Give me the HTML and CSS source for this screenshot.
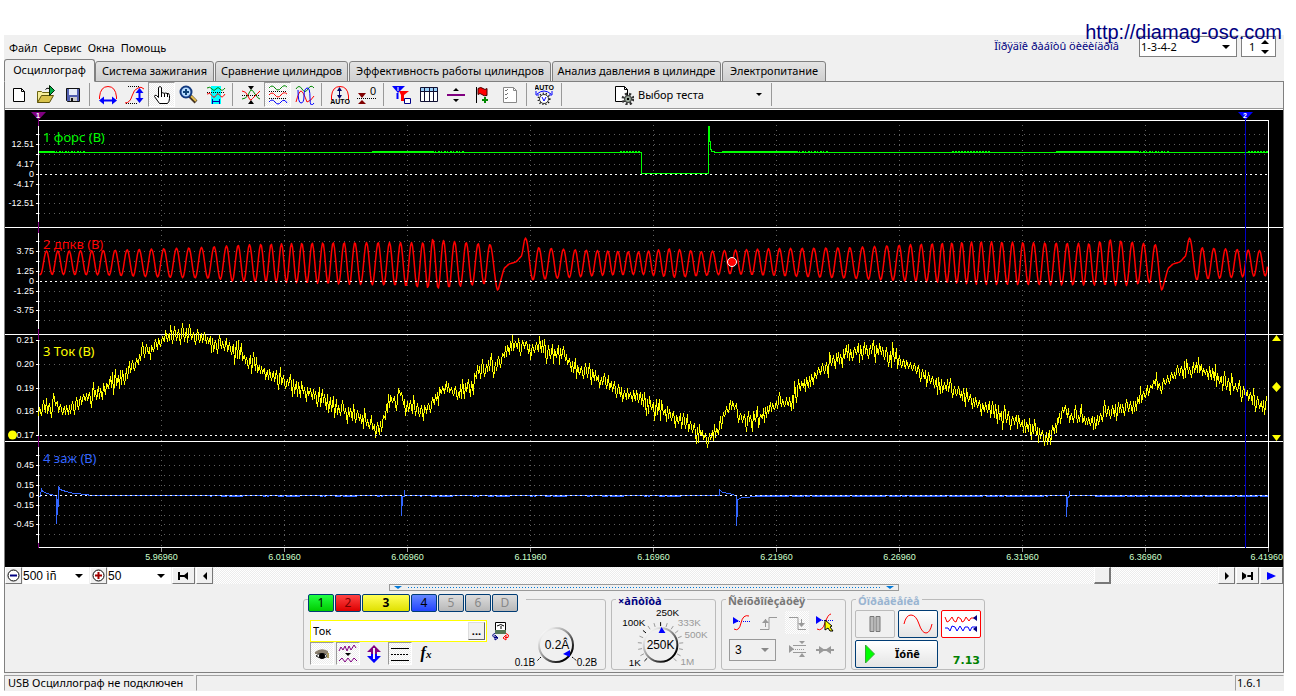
FILE: index.html
```html
<!DOCTYPE html>
<html lang="ru">
<head>
<meta charset="utf-8">
<title>Осциллограф</title>
<link rel="stylesheet" href="styles.css">
</head>
<body>
<div class="app">
  <header class="top">
    <nav class="menu">
      <button class="menu-item">Файл</button>
      <button class="menu-item">Сервис</button>
      <button class="menu-item">Окна</button>
      <button class="menu-item">Помощь</button>
    </nav>
    <div class="order">
      <label class="order-label" for="order">Ïîðÿäîê ðàáîòû öèëèíäðîâ</label>
      <span class="combo order-combo">
        <select id="order"><option>1-3-4-2</option></select>
        <svg class="combo-arrow" width="8" height="4"><path d="M0 0h8l-4 4z"/></svg>
      </span>
      <span class="combo order-count">
        <input type="number" value="1" aria-label="Цилиндр">
        <svg class="combo-arrow" width="8" height="14"><path d="M0 4h8l-4-4zM0 10h8l-4 4z"/></svg>
      </span>
    </div>
    <a class="site" href="http://diamag-osc.com">http://diamag-osc.com</a>
  </header>

  <div class="tabs" role="tablist">
    <button class="tab active" role="tab">Осциллограф</button>
    <button class="tab t2" role="tab">Система зажигания</button>
    <button class="tab t3" role="tab">Сравнение цилиндров</button>
    <button class="tab t4" role="tab">Эффективность работы цилиндров</button>
    <button class="tab t5" role="tab">Анализ давления в цилиндре</button>
    <button class="tab t6" role="tab">Электропитание</button>
  </div>

  <main class="page">
    <div class="toolbar" role="toolbar">
      <button class="tool" aria-label="Новый"><svg class="icon"><path d="M4.500 3.500h8l3 3v10h-11z" fill="#fff" stroke="#000"/><path d="M12.500 3.500v3h3" fill="none" stroke="#000"/></svg></button>
      <button class="tool" aria-label="Открыть"><svg class="icon"><path d="M1.500 17.500v-11h4l1 1h7v3" fill="#f6ee9a" stroke="#6b6410"/><path d="M1.500 17.500l4-7h12l-4 7z" fill="#d8c24a" stroke="#5c520c"/><path d="M9.500 4.500q1-2 4-1" fill="none" stroke="#000"/><path d="M13.500 0.500l5 5l-5 5z" fill="#0a4" stroke="#020"/></svg></button>
      <button class="tool" aria-label="Сохранить"><svg class="icon"><path d="M3.500 3.500h13v13h-12l-1-1z" fill="#5360b0" stroke="#111"/><path d="M6 4h8v6h-8z" fill="#e8eef8"/><path d="M7 12h7v4h-7z" fill="#ccc"/><path d="M8 13h2v3h-2z" fill="#111"/></svg></button>
      <i class="sep"></i>
      <button class="tool" aria-label="Масштаб времени"><svg class="icon"><path d="M1.500 14v-2q1-10.500 8.500-10.500t8.500 10.500v2" fill="none" stroke="#f00"/><path d="M1 15.500l5-4v3h8v-3l5 4l-5 4v-3h-8v3z" fill="#00f"/></svg></button>
      <button class="tool" aria-label="Масштаб амплитуды"><svg class="icon"><path d="M3 1.500h12M1 18.500h12" stroke="#000" stroke-dasharray="1 1"/><path d="M0 18q5 0 7-7t6-8q3-2 6 1" fill="none" stroke="#f00"/><path d="M14.500 3l4 5h-3v5h3l-4 5l-4-5h3v-5h-3z" fill="#00f"/></svg></button>
      <button class="tool pressed" aria-label="Рука"><svg class="icon"><path d="M7.500 18.500l-5-7q0-2 2-1l2 2v-10q1.500-2 3 0v6q1.500-2 2.500 0q2-1 3 0q2-1 2.500 2v3q0 3-2 5z" fill="#fff" stroke="#000"/><path d="M9.500 8v4M12.500 9v3M15.500 9v3" stroke="#000"/></svg></button>
      <button class="tool" aria-label="Лупа"><svg class="icon"><path d="M11 11l6 6" stroke="#432" stroke-width="4"/><path d="M12 11l5 5" stroke="#e5bf50" stroke-width="2"/><circle cx="7" cy="7" r="5.500" fill="#b8dcff" stroke="#123a80" stroke-width="2"/><path d="M7 4v6M4 7h6" stroke="#147" stroke-width="2"/></svg></button>
      <button class="tool" aria-label="Выделить период"><svg class="icon"><path d="M5 1h10v18h-10z" fill="#0ff"/><path d="M1 3q3-2 5 1t4 0t4 0t5-1" fill="none" stroke="#080"/><path d="M1 7.500h18" stroke="#000" stroke-dasharray="1 1"/><path d="M1 9q3-2 5 1.500t4 0t4 0t5-1.500" fill="none" stroke="#f00"/><path d="M6 16.500h8M6.500 14v5M13.500 14v5" stroke="#00a"/></svg></button>
      <i class="sep"></i>
      <button class="tool" aria-label="Наложить"><svg class="icon"><path d="M7 1h6l-3 4zM7 19h6l-3-4z"/><path d="M1 10.500h18" stroke="#000" stroke-dasharray="1 1"/><path d="M1 14q4 0 6-4t3-5t4 4t5 5" fill="none" stroke="#080"/><path d="M1 6q4 0 6 5t3 4t4-4t5-5" fill="none" stroke="#f00"/></svg></button>
      <button class="tool pressed" aria-label="Разнести"><svg class="icon"><path d="M1 3q3-4 6 0t6 0t6-1" fill="none" stroke="#080"/><path d="M1 6.500h18M1 13.500h18" stroke="#000" stroke-dasharray="1 1"/><path d="M1 10q3-4 6 0t6 0t6-1" fill="none" stroke="#f00"/><path d="M1 17q3-4 6 0t6 0t6 1" fill="none" stroke="#00f"/></svg></button>
      <button class="tool" aria-label="Совместить"><svg class="icon"><path d="M1 4q3-5 6 0t6 0t6-1" fill="none" stroke="#080"/><path d="M1 17q3-11 5-11t6 11q4-1 7-6" fill="none" stroke="#f00"/><path d="M3 5q0 13 3 13t3-7t3-8t3 10t4 5" fill="none" stroke="#00f"/></svg></button>
      <i class="sep"></i>
      <button class="tool" aria-label="Автомасштаб"><svg class="icon"><path d="M1.500 15v-4q1-9.500 8.500-9.500t8.500 9.500v4" fill="none" stroke="#f00"/><path d="M9.500 3v10" stroke="#006"/><path d="M7 6h5l-2.500-4zM7 10h5l-2.500 4z" fill="#006"/><text x="10" y="19" class="auto">AUTO</text></svg></button>
      <button class="tool" aria-label="Ноль"><svg class="icon"><path d="M1 8h8l-4 5zM1 19h8l-4-4z" fill="#800000"/><path d="M0 13.500h19" stroke="#000" stroke-dasharray="1 1"/><text x="16" y="10" class="zero">0</text></svg></button>
      <i class="sep"></i>
      <button class="tool" aria-label="Фильтр"><svg class="icon"><path d="M0 1h13l-7 7z" fill="#00f"/><path d="M7 6h10l-5 4v6h-3v-6z" fill="#f00"/><path d="M5.500 8v6" stroke="#00f" stroke-width="2"/><path d="M12.500 13.500h6v5h-6z" fill="#fff" stroke="#008"/><path d="M6 2v4" stroke="#fff"/></svg></button>
      <button class="tool" aria-label="Таблица"><svg class="icon"><path d="M1.500 2.500h17v14h-17z" fill="#fff" stroke="#113"/><path d="M2 3h16v3h-16z" fill="#9cd0f8"/><path d="M1.500 6.500h17M5.500 3v13M10.500 3v13M14.500 3v13" stroke="#113"/></svg></button>
      <button class="tool" aria-label="Разделитель"><svg class="icon"><path d="M7 6h6l-3-3zM7 14h6l-3 3z"/><path d="M1 10h18" stroke="#800080" stroke-width="2"/></svg></button>
      <button class="tool" aria-label="Добавить метку"><svg class="icon"><path d="M3.500 2v16" stroke="#000"/><path d="M5 3.500q3-2 5 0t4 0v7q-3 1-5-1t-4 0z" fill="#f00" stroke="#400"/><path d="M12 12v6M9 15h6" stroke="#080" stroke-width="2"/></svg></button>
      <button class="tool" aria-label="Отчёт"><svg class="icon"><path d="M3.500 2.500h10l3 3v12h-13z" fill="#fff" stroke="#888"/><path d="M5 5l1 1l2-2M5 9l1 1l2-2M5 13l1 1l2-2" fill="none" stroke="#777"/><path d="M13.500 2.500v3h3" fill="none" stroke="#888"/></svg></button>
      <i class="sep"></i>
      <button class="tool" aria-label="Авто"><svg class="icon"><text x="9" y="5" class="auto">AUTO</text><path d="M2 9q7-6 14 0M1 6v4h3M17 6v4h-3" fill="none" stroke="#00f"/><circle cx="9" cy="14" r="5.500" fill="none" stroke="#000" stroke-width="2" stroke-dasharray="1 2"/><circle cx="9" cy="14" r="4.500" fill="#fff" stroke="#333"/><path d="M7 12l2 4l2-4" fill="none" stroke="#00f"/></svg></button>
      <i class="sep"></i>
      <button class="test">
        <svg class="icon"><path d="M1.500 1.500h9l3 3v12h-12z" fill="#fff" stroke="#000"/><path d="M10.500 1.500v3h3" fill="none" stroke="#000"/><circle cx="14" cy="14" r="5" fill="none" stroke="#333" stroke-width="3" stroke-dasharray="2 2"/><circle cx="14" cy="14" r="3.500" fill="#9aa89a" stroke="#333"/><path d="M13 13h2v2h-2z"/></svg>
        <span class="test-name">Выбор теста</span>
        <svg width="6" height="3"><path d="M0 0h6l-3 3z"/></svg>
      </button>
      <i class="sep"></i>
    </div>

    <svg class="scope" viewBox="5 110 1278 457" role="img" aria-label="Осциллограмма">
      <g id="grid"></g>
      <g id="traces"></g>
      <g id="front"></g>
    </svg>

    <div class="timeline">
      <button class="step" aria-label="Уменьшить"><svg width="13" height="13"><circle cx="6.500" cy="6.500" r="5.500" fill="#fff" stroke="#000"/><path d="M3 6.500h7" stroke="#000080" stroke-width="2"/></svg></button>
      <span class="combo time-combo"><select aria-label="Период"><option>500 ìñ</option></select><svg class="combo-arrow" width="8" height="4"><path d="M0 0h8l-4 4z"/></svg></span>
      <button class="step" aria-label="Увеличить"><svg width="13" height="13"><circle cx="6.500" cy="6.500" r="5.500" fill="#fff" stroke="#000"/><path d="M3 6.500h7M6.500 3v7" stroke="#a00000" stroke-width="2"/></svg></button>
      <span class="combo count-combo"><select aria-label="Число точек"><option>50</option></select><svg class="combo-arrow" width="8" height="4"><path d="M0 0h8l-4 4z"/></svg></span>
      <button class="step wide" aria-label="В начало"><svg width="11" height="8"><path d="M0 0h2v8h-2zM10 0v8l-5-4zM2 3h5v2h-5z"/></svg></button>
      <button class="step" aria-label="Назад"><svg width="4" height="8"><path d="M4 0v8l-4-4z"/></svg></button>
      <input class="scroll" type="range" min="0" max="1000" value="892" aria-label="Прокрутка">
      <button class="step" aria-label="Вперёд"><svg width="4" height="8"><path d="M0 0v8l4-4z"/></svg></button>
      <button class="step wide" aria-label="В конец"><svg width="11" height="8"><path d="M9 0h2v8h-2zM0 0v8l6-4zM4 3h5v2h-5z"/></svg></button>
      <button class="step wide" aria-label="Играть"><svg width="9" height="8"><path d="M0 0v8l9-4z" fill="#00f"/></svg></button>
    </div>

    <div class="splitter">
      <svg width="8" height="3"><path d="M0 0h8l-4 3z" fill="#0078d7"/></svg>
      <i class="dots"></i>
      <svg width="8" height="3"><path d="M0 0h8l-4 3z" fill="#0078d7"/></svg>
    </div>

    <div class="controls">
      <section class="group channels">
        <div class="chan-row">
          <button class="chan green">1</button>
          <button class="chan red">2</button>
          <button class="chan yellow">3</button>
          <button class="chan blue">4</button>
          <button class="chan off" disabled>5</button>
          <button class="chan off" disabled>6</button>
          <button class="chan off" disabled>D</button>
        </div>
        <div class="chan-body">
          <div class="chan-left">
            <div class="name-row">
              <div class="name-box"><input class="name" type="text" value="Ток" aria-label="Имя канала"><button class="more">...</button></div>
              <button class="mini" aria-label="Датчик"><svg class="icon"><path d="M4.500 1.500h10v8h-10z" fill="#fff" stroke="#000"/><path d="M4 9h11v4h-11z" fill="#575"/><path d="M6 5q4-3 7 0M10 5v3" fill="none" stroke="#000"/><path d="M4 12.500q-4 1-1 4h3M4 14v5l3-2z" fill="none" stroke="#000080"/><path d="M15 12.500q4 1 2 4h-3M15 14v5l-3-2z" fill="none" stroke="#f00"/></svg></button>
            </div>
            <div class="mini-row">
              <button class="mini on" aria-label="Видимость"><svg class="icon"><path d="M3 8q6-5 13-1v3h-13z" fill="#8a8070"/><path d="M4 12q5-5 12 0q-6 4-12 0z" fill="#fff" stroke="#222"/><circle cx="10" cy="12" r="3" fill="#000"/><path d="M15 9h2v5h-2z" fill="#aa9a60"/></svg></button>
              <button class="mini on" aria-label="Сглаживание"><svg class="icon"><path d="M1 7l2-4l2 3l2-4l2 5l2-5l2 4l3-5l2 3" fill="none" stroke="#800080"/><path d="M7 9h6l-3 3z"/><path d="M1 17l3-3l3 4l3-4l3 4l3-4l3 3" fill="none" stroke="#800080"/></svg></button>
              <button class="mini" aria-label="Инвертировать"><svg class="icon"><path d="M10 1l7 7h-4v2h-6v-2h-4z" fill="#800080"/><path d="M10 19l7-7h-4v-2h-6v2h-4z" fill="#00f"/><path d="M10 4v11" stroke="#f0f0f0" stroke-width="2"/></svg></button>
              <button class="mini on" aria-label="Уровни"><svg class="icon"><path d="M1 4.500h18M1 16.500h18" stroke="#000"/><path d="M1 10.500h18" stroke="#000" stroke-dasharray="2 1"/></svg></button>
              <button class="mini fx" aria-label="Формула">f<small>x</small></button>
            </div>
          </div>
          <svg class="level" viewBox="0 0 84 60" role="slider" aria-label="Уровень" aria-valuenow="0.2">
            <defs><linearGradient id="rim" x1="0" y1="0" x2="1" y2="1"><stop offset="0.100" stop-color="#fff"/><stop offset="0.450" stop-color="#999"/><stop offset="0.850" stop-color="#000"/></linearGradient></defs>
            <circle cx="43" cy="29" r="17" fill="#f0f0f0" stroke="url(#rim)" stroke-width="2"/>
            <path d="M50 38l7-4v7z" fill="#00f"/><path d="M28 41l-4 4M59 41l5 4" stroke="#000" stroke-dasharray="2 1"/>
            <text class="val" x="44" y="33">0.2Â</text><text class="lab" x="12" y="50">0.1В</text><text class="lab" x="74" y="50">0.2В</text>
          </svg>
        </div>
      </section>

      <section class="group freq">
        <h2 class="navy">×àñòîòà</h2>
        <svg class="rate" viewBox="612 606 104 62" role="slider" aria-label="Частота" aria-valuenow="250">
          <g id="ticks"></g>
          <circle cx="661" cy="645" r="17" fill="#f0f0f0" stroke="url(#rim)" stroke-width="2"/>
          <path d="M659 633l3-6l4 6z" fill="#00f"/>
          <text class="val" x="661" y="649">250K</text>
          <text class="lab" x="668" y="616">250K</text><text class="lab" x="634" y="626">100K</text><text class="lab" x="635" y="666">1K</text>
          <text class="lab dim" x="690" y="626">333K</text><text class="lab dim" x="697" y="638">500K</text><text class="lab dim" x="688" y="665">1M</text>
        </svg>
      </section>

      <section class="group sync">
        <h2 class="gray">Ñèíõðîíèçàöèÿ</h2>
        <div class="sync-grid">
          <button class="mini" aria-label="Синхронизация"><svg class="icon"><path d="M2 4v7l6-3z" fill="#00f"/><path d="M2 8.500h17" stroke="#00f" stroke-dasharray="1 1"/><path d="M3 16q5 3 7-6t8-7" fill="none" stroke="#f00"/></svg></button>
          <button class="mini" aria-label="Фронт" disabled><svg class="icon"><path d="M1 16.500h9v-12h8" fill="none" stroke="#999"/><path d="M6.500 6v8" stroke="#999"/><path d="M3 10h7l-3.500-4z" fill="#999"/></svg></button>
          <button class="mini check" aria-label="Спад" disabled><svg class="icon"><path d="M2 4.500h9v12h8" fill="none" stroke="#999"/><path d="M14.500 6v7" stroke="#999"/><path d="M11 10h7l-3.500 4z" fill="#999"/></svg></button>
          <button class="mini" aria-label="Ручная"><svg class="icon"><path d="M1 3v8l6-4z" fill="#00f"/><path d="M1 7.500h18" stroke="#00f" stroke-dasharray="1 1"/><path d="M2 16q5 3 8-6t6-9" fill="none" stroke="#f00"/><path d="M10 7l7 6l-2 1l3 4h-3l-2-3l-3 2z" fill="#ff0" stroke="#000"/></svg></button>
          <span class="combo sync-combo"><select aria-label="Канал" disabled><option>3</option></select><svg class="combo-arrow" width="8" height="4"><path d="M0 0h8l-4 4z" fill="#888"/></svg></span>
          <button class="mini" aria-label="Уровень" disabled><svg class="icon"><path d="M2 5v8l5-4zM12 1h6l-3 3zM12 17h6l-3-4z" fill="#999"/><path d="M4 9.500h14" stroke="#999" stroke-dasharray="1 1"/><path d="M6 5.500h13M6 12.500h13" stroke="#999"/></svg></button>
          <button class="mini" aria-label="Центр" disabled><svg class="icon"><path d="M4 6l6 4l-6 4zM16 6l-6 4l6 4z" fill="#999"/><path d="M1 10h18" stroke="#999" stroke-width="2"/></svg></button>
        </div>
      </section>

      <section class="group run">
        <h2 class="pale">Óïðàâëåíèå</h2>
        <div class="run-row">
          <button class="big off" aria-label="Пауза" disabled><svg width="12" height="16"><path d="M1 .5h4v15h-4zM7 .5h4v15h-4z" fill="#bbb" stroke="#777"/></svg></button>
          <button class="big" aria-label="Синус"><svg width="30" height="20"><path d="M1 10q2-9 7-9t8 9t7 9t6-9" fill="none" stroke="#f00"/></svg></button>
          <button class="big sel" aria-label="Поток"><svg width="34" height="20"><path d="M1 3l2 5l2-1l3-4l2 4l2 1l2-5l3 2l1 3l2-1l2-4l3 4l2-3h4" fill="none" stroke="#f00"/><path d="M1 14h3l2 3l2-5l3 1l2 4l3-5l3 5l2-4l3 0l2 4l2-4h4" fill="none" stroke="#00f"/><path d="M33 1v6l-4-3zM33 12v6l-4-3z" fill="#000080"/></svg></button>
        </div>
        <div class="run-row">
          <button class="start"><svg width="10" height="20"><path d="M.5 1v18l9-9z" fill="#0f0" stroke="#3a3"/></svg><span>Ïóñê</span></button>
          <output class="volt">7.13</output>
        </div>
      </section>
    </div>
  </main>

  <footer class="status">
    <span class="pane state">USB Осциллограф не подключен</span>
    <span class="pane fill"></span>
    <span class="pane ver">1.6.1</span>
  </footer>
</div>
<script src="scope.js"></script>
</body>
</html>
```

FILE: styles.css
```css
* { box-sizing: border-box; }
body {
  margin: 0;
  padding: 35px 12px 5px 4px;
  background: #fff;
  color: #000;
  font: 11px/14px "Noto Sans", sans-serif;
}
button, input, select { font: inherit; color: inherit; margin: 0; padding: 0; border: 0; background: none; border-radius: 0; }
select { appearance: none; opacity: 1; }
input[type="number"] { appearance: textfield; }
input::-webkit-inner-spin-button { appearance: none; margin: 0; }
svg { display: block; flex: none; }
.icon { width: 20px; height: 20px; }
.auto { font: bold 7px "Liberation Sans", sans-serif; text-anchor: middle; }
.zero { font: 11px "Liberation Sans", sans-serif; text-anchor: middle; }

.app { background: #f0f0f0; }
.top { position: relative; display: flex; height: 24px; align-items: center; }
.menu { display: flex; gap: 6px; padding: 2px 0 0 5px; }
.order { display: flex; align-items: center; margin-left: auto; padding-right: 8px; gap: 4px; height: 22px; align-self: flex-start; }
.order-label { color: #000080; font-size: 11px; margin-right: 16px; }
.combo { display: grid; align-items: center; background: #fff; }
.combo > * { grid-area: 1 / 1; }
.combo > select, .combo > input { width: 100%; height: 100%; }
.combo-arrow { justify-self: end; margin-right: 6px; pointer-events: none; }
.order-combo, .order-count { height: 21px; border: 1px solid #808080; margin-top: 1px; }
.order-combo { width: 98px; }
.order-combo select { padding-left: 1px; }
.order-count { width: 35px; }
.order-count input { padding-left: 7px; }
.site { position: absolute; right: 2px; top: -15px; color: #000080; font: 20px/24px "Liberation Sans", sans-serif; text-decoration: none; }

.tabs { display: flex; align-items: flex-end; height: 23px; gap: 1px; margin-bottom: -1px; }
.tab { height: 21px; padding-bottom: 2px; border: 1px solid #808080; border-radius: 3px 3px 0 0; background: linear-gradient(#e4e4e4, #cfcfcf); white-space: nowrap; }
.tab.active { width: 91px; height: 23px; background: #f0f0f0; border-bottom-color: #f0f0f0; margin-right: -1px; }
.t2 { width: 119px; } .t3 { width: 133px; } .t4 { width: 202px; } .t5 { width: 169px; } .t6 { width: 104px; }

.page { border: 1px solid #808080; }
.toolbar { display: flex; align-items: center; height: 28px; padding-bottom: 2px; border-bottom: 1px solid #fff; box-shadow: inset 0 -1px #999; }
.tool { width: 27px; height: 25px; display: grid; place-items: center; }
.pressed, .on, .check { background: repeating-conic-gradient(#fff 0 25%, #ececec 0 50%) 0 0 / 2px 2px; border: 1px solid; border-color: #999 #fff #fff #999; }
.check { border: 0; }
.sep { width: 1px; height: 23px; margin: 0 4px 0 3px; background: #999; }
.test { display: flex; align-items: center; gap: 4px; width: 202px; padding: 0 6px 0 48px; }
.test-name { flex: 1; text-align: left; }

.scope { width: 100%; height: auto; background: #000; }
.axis { font: 9px "Liberation Sans", sans-serif; fill: #fff; text-anchor: end; }
.time { font: 9px "Liberation Sans", sans-serif; fill: #cfc; text-anchor: middle; }
.time.last { text-anchor: end; }
.title { font: 13px "Noto Sans", sans-serif; }
.mark { font: bold 7px "Liberation Sans", sans-serif; fill: #fff; text-anchor: middle; }
.px { shape-rendering: crispEdges; fill: none; stroke-width: 1; }
.wave { fill: none; stroke-width: 1.5; stroke-linejoin: round; }

.timeline { display: flex; height: 17px; gap: 1px; background: #f0f0f0; }
.step { width: 17px; display: grid; place-items: center; border: 1px solid; border-color: #fff #777 #777 #fff; background: #f0f0f0; flex: none; }
.step.wide { width: 23px; }
.time-combo { width: 66px; }
.count-combo { width: 63px; }
.timeline select { font: 12px "Liberation Sans", sans-serif; }
.scroll { appearance: none; flex: 1; min-width: 0; height: 17px; background: repeating-conic-gradient(#fff 0 25%, #ececec 0 50%) 0 0 / 2px 2px; }
.scroll::-webkit-slider-thumb { appearance: none; width: 17px; height: 17px; background: #f0f0f0; border: 1px solid; border-color: #fff #777 #777 #fff; border-width: 1px 2px 2px 1px; }

.splitter { display: flex; align-items: center; width: 510px; height: 7px; margin: 0 auto; padding: 0 4px; gap: 6px; border: 1px solid #999; }
.dots { flex: 1; height: 1px; background: repeating-linear-gradient(90deg, #0078d7 0 1px, transparent 1px 3px); }

.controls { display: flex; justify-content: center; gap: 5px; padding: 8px 0 2px; }
.group { border: 1px solid #bbb; border-radius: 3px; height: 71px; }
.group h2 { width: max-content; margin: -6px 0 0 4px; padding: 0 2px; background: #f0f0f0; font: bold 11px/14px "Noto Sans", sans-serif; }
.navy { color: #000080; } .gray { color: #777; } .pale { color: #99b4d1; }
.channels { width: 303px; padding-left: 4px; }
.chan-row { display: flex; gap: 1px; width: 218px; margin-top: -6px; background: #f0f0f0; }
.chan { width: 26px; height: 18px; border: 1px solid #003c74; border-radius: 2px; font: 12px/14px "Noto Sans", sans-serif; }
.chan.green { background: linear-gradient(#2f4, #0c0); }
.chan.red { background: linear-gradient(#f44, #d00); color: #700; }
.chan.yellow { width: 48px; background: linear-gradient(#ff5, #e0e000); font-weight: bold; }
.chan.blue { background: linear-gradient(#68f, #24f); }
.chan.off { background: linear-gradient(#ddd, #b8b8b8); color: #888; }
.chan-body { display: flex; }
.chan-left { padding: 7px 0 0 2px; width: 205px; }
.name-row { display: flex; align-items: center; gap: 2px; }
.name-box { display: flex; width: 177px; height: 22px; padding: 1px; border: 1px solid #ff0; background: #fff; }
.name { flex: 1; min-width: 0; padding-left: 1px; font: 11px "Noto Sans", sans-serif; }
.more { width: 17px; border: 1px solid; border-color: #ddd #666 #666 #ddd; background: #f0f0f0; font-weight: bold; line-height: 10px; }
.mini { width: 24px; height: 23px; display: grid; place-items: center; }
.mini-row { display: flex; gap: 2px; }
.fx { display: block; font: italic bold 16px/20px "Liberation Serif", serif; }
.fx small { font-size: 11px; }
.level { width: 84px; height: 60px; margin-top: 4px; }
.val { font: 12px "Liberation Sans", sans-serif; text-anchor: middle; }
.lab { font: 10px "Liberation Sans", sans-serif; text-anchor: middle; }
.dim { fill: #999; }
.freq { width: 105px; }
.rate { width: 103px; height: 62px; margin-top: -2px; }
.sync { width: 125px; }
.sync-grid { display: grid; grid-template-columns: 24px 24px 24px 24px; gap: 4px; padding: 3px 0 0 7px; align-items: center; }
.sync-combo { grid-column: span 2; width: 47px; height: 22px; border: 1px solid #999; background: #f0f0f0; }
.sync-combo select { padding-left: 5px; font: 12px "Liberation Sans", sans-serif; }
.run { width: 134px; }
.run-row { display: flex; gap: 3px; padding: 2px 0 0 3px; }
.big { width: 40px; height: 28px; display: grid; place-items: center; border: 1px solid #003c74; border-radius: 2px; background: linear-gradient(#fff, #e4e4e4); }
.big.off { border-color: #bbb; background: #f0f0f0; }
.big.sel { border-color: #f00; background: #fff; }
.start { width: 83px; height: 28px; display: flex; align-items: center; gap: 20px; padding-left: 9px; border: 1px solid #003c74; border-radius: 2px; background: linear-gradient(#fff, #e4e4e4); font-weight: bold; }
.volt { flex: 1; padding: 13px 4px 0 0; text-align: right; color: #008000; font: bold 11px/16px "DejaVu Sans", sans-serif; }

.status { display: flex; gap: 2px; padding-top: 2px; height: 18px; line-height: 13px; }
.pane { border: 1px solid; border-color: #a0a0a0 #f0f0f0 #f0f0f0 #a0a0a0; padding-left: 3px; white-space: nowrap; overflow: hidden; }
.state { width: 190px; }
.fill { flex: 1; }
.ver { width: 49px; padding-left: 1px; }
```

FILE: scope.js
```js
const LEFT = 38.5, RIGHT = 1268.5;
const line = (d, color, extra = '') => `<path class="px" d="${d}" stroke="${color}" ${extra}/>`;
const text = (cls, x, y, s, extra = '') => `<text class="${cls}" x="${x}" y="${y}" ${extra}>${s}</text>`;

const channels = [
  { title: '1 форс (В)', color: '#0f0', y: 142, zero: 174, rows: [134, 144, 154, 164, 174, 184, 194, 203, 213],
    labels: { 144: '12.51', 164: '4.17', 174: '0', 184: '-4.17', 203: '-12.51' } },
  { title: '2 дпкв (В)', color: '#f00', y: 249, zero: 281, rows: [241, 251, 261, 271, 281, 291, 301, 310, 320],
    labels: { 251: '3.75', 271: '1.25', 281: '0', 291: '-1.25', 310: '-3.75' } },
  { title: '3 Ток (В)', color: '#ff0', y: 356, zero: 435, rows: [340, 364, 388, 411, 435],
    labels: { 340: '0.21', 364: '0.20', 388: '0.19', 411: '0.18', 435: '0.17' } },
  { title: '4 заж (В)', color: '#36f', y: 463, zero: 495, rows: [455, 465, 475, 485, 495, 505, 515, 524, 534],
    labels: { 465: '0.45', 485: '0.15', 495: '0', 505: '-0.15', 524: '-0.45' } }
];

let seed = 7;
const rand = () => (seed = (seed * 16807) % 2147483647) / 2147483647;

function at(points, x) {
  for (let i = 1; i < points.length; i++) {
    if (x <= points[i][0]) {
      const [x0, y0] = points[i - 1], [x1, y1] = points[i];
      return y0 + (y1 - y0) * (x - x0) / (x1 - x0);
    }
  }
  return points[points.length - 1][1];
}

/* grid, scales and labels */
let grid = '';
const times = ['5.96960', '6.01960', '6.06960', '6.11960', '6.16960', '6.21960', '6.26960', '6.31960', '6.36960', '6.41960'];
times.forEach((t, i) => {
  const x = 161.5 + 123 * i;
  const last = i === times.length - 1;
  if (!last) grid += line(`M${x} 125V547`, '#606060', 'stroke-dasharray="1 4"');
  grid += line(`M${x} 547V552`, '#999') + (last ? text('time last', 1283, 560, t) : text('time', x, 560, t));
});
for (const c of channels) {
  for (const y of c.rows) {
    if (y !== c.zero) grid += line(`M39 ${y + .5}H1268`, '#606060', 'stroke-dasharray="1 4"');
    grid += line(`M36 ${y + .5}H39`, '#fff');
    if (c.labels[y]) grid += text('axis', 34, y + 3, c.labels[y]);
  }
}
for (const y of [227.5, 334.5, 441.5]) grid += line(`M5 ${y}H1283`, '#fff');
grid += line(`M${LEFT} 120.5H${RIGHT}V547.5H${LEFT}Z`, '#fff');
for (const [a, b] of [[119, 126], [222, 233], [329, 340], [436, 447], [543, 548]]) grid += line(`M38.5 ${a}V${b}`, '#800080');
document.getElementById('grid').innerHTML = grid;

/* channel 1: injector */
let traces = line('M39 152.500H641.500V173.500H708.500V126.500H709.500V141.500H710.500V149.500H711.500V151.500H714.500V152.500H1268', '#0f0');
for (const [a, b] of [[39, 53], [372, 432], [722, 796], [1056, 1137]])
  traces += line(`M${a} 151.5H${b}`, '#0f0') + line(`M${b} 151.5H${b + 32}`, '#0f0', 'stroke-dasharray="2 1 1 2"');
traces += line('M952 151.500H990M1248 151.500H1268M620 151.500H641', '#0f0', 'stroke-dasharray="2 1"');
traces += line('M708.500 173V126', '#0f0');

/* channel 2: crankshaft sensor, with the missing-tooth gap */
const tops = [[38, 250.5], [100, 250], [200, 247], [250, 244], [330, 242], [425, 242], [432, 238.5], [443, 240], [490, 244],
  [538, 247], [570, 249], [640, 251.5], [668, 248], [700, 251], [735, 249.5], [770, 248], [850, 247], [910, 244], [980, 241],
  [1030, 242], [1090, 243], [1109, 239], [1155, 244], [1201, 247], [1259, 250]];
const lows = [[38, 274], [100, 274.5], [170, 277], [215, 278], [230, 280.5], [320, 283], [395, 285], [438, 288], [490, 283],
  [533, 279.5], [600, 275], [640, 274], [675, 277], [730, 273.5], [850, 278], [915, 281], [980, 284], [1126, 285],
  [1150, 282], [1197, 279], [1259, 275.5]];
const peaks = [138, 172, 206, 240, 274, 308, 344, 380, 416, 453, 490, 528, 565, 603, 641, 678, 713, 747, 781, 812, 843, 873, 904, 935,
  967, 998, 1031, 1063, 1098, 1133, 1167, 1200, 1233, 1267].map(v => v / 3)
  .concat([37, 69, 102, 137, 173, 208].map(v => 420 + v / 3));
const mid = [355, 392, 429, 464, 497, 531, 562, 592, 623, 654, 684, 714, 746, 777, 811, 842, 876, 912, 945, 978, 1011, 1044, 1077,
  1110, 1145, 1180, 1216, 1252, 1288].map(v => 420 + v / 3)
  .concat([36, 72, 109, 146, 180, 212, 245, 275, 304, 334, 363, 392, 423, 454, 486, 517, 549, 583, 617, 650, 684, 715, 748, 779, 811,
    845, 879, 914].map(v => 850 + v / 3));
const tail = [1055, 1090, 1125, 1160, 1193, 1227, 1261].map(v => 850 + v / 3);
const keys = [];
const add = list => list.forEach((x, i) => {
  keys.push([x, at(tops, x)]);
  if (i < list.length - 1) { const m = (x + list[i + 1]) / 2; keys.push([m, at(lows, m)]); }
});
const gap = x => keys.push([x, 290], [x + 6, 268], [x + 11, 263.5], [x + 18, 261.5], [x + 23, 256], [x + 27.5, 237.5], [x + 35, 279.5]);
keys.push([40, 274]);
add(peaks);
gap(497.5);
add(mid);
gap(1161.5);
add(tail);
let red = '';
let k = 1;
for (let x = 39; x <= 1267; x++) {
  while (k < keys.length - 1 && keys[k][0] < x) k++;
  const [x0, y0] = keys[k - 1], [x1, y1] = keys[k];
  const t = Math.min(1, Math.max(0, (x - x0) / (x1 - x0)));
  const s = (x > 497 && x < 521) || (x > 1161 && x < 1185) ? t : (1 - Math.cos(Math.PI * t)) / 2;
  red += (red ? 'L' : 'M') + (x + .5) + ' ' + (y0 + (y1 - y0) * s + .5).toFixed(1);
}
traces += `<path class="wave" d="${red}" stroke="#f00"/>`;

/* channel 3: current, a slow wave under fast ripple */
const base = [[38, 413], [45, 407], [52, 407], [55, 399], [60, 412], [68, 411], [75, 404], [85, 398], [100, 391], [110, 384],
  [120, 379], [130, 370], [140, 358], [150, 350], [158, 344], [165, 338], [175, 336], [185, 336], [195, 336], [205, 339], [215, 343],
  [225, 347], [235, 353], [250, 362], [265, 372], [285, 381], [300, 388], [320, 398], [340, 409], [355, 415], [365, 421], [375, 428],
  [384, 424], [388, 400], [392, 398], [396, 402], [400, 390], [405, 406], [412, 406], [418, 412], [424, 412], [433, 400], [440, 393],
  [446, 385], [452, 392], [458, 397], [464, 388], [472, 388], [478, 370], [485, 370], [492, 367], [500, 363], [505, 350], [512, 345],
  [520, 343], [524, 343], [530, 348], [540, 349], [552, 352], [565, 357], [575, 367], [590, 373], [605, 383], [620, 392], [640, 400],
  [655, 408], [665, 412], [680, 421], [695, 429], [708, 438], [718, 433], [724, 415], [730, 406], [735, 404], [738, 419], [750, 418],
  [760, 420], [768, 408], [780, 404], [790, 402], [800, 387], [810, 380], [820, 371], [830, 363], [840, 357], [850, 353], [862, 350],
  [874, 349], [885, 352], [895, 358], [905, 363], [920, 371], [940, 384], [960, 394], [980, 405], [1000, 414], [1020, 422],
  [1035, 431], [1048, 439], [1054, 431], [1060, 415], [1065, 407], [1070, 420], [1080, 418], [1090, 423], [1100, 417], [1110, 409],
  [1125, 408], [1135, 405], [1143, 396], [1150, 390], [1155, 380], [1160, 387], [1168, 380], [1175, 375], [1182, 370], [1190, 371],
  [1200, 369], [1210, 374], [1225, 383], [1240, 390], [1250, 398], [1262, 405], [1268, 408]];
let yellow = '';
let up = 1;
for (let x = 38.5; x <= 1268; x += rand() < .45 ? 1 : 2) {
  const y = at(base, x) + up * (3 + rand() * rand() * 13);
  yellow += (yellow ? 'L' : 'M') + x + ' ' + y.toFixed(1);
  up = -up;
}
traces += line(yellow, '#ff0');

/* channel 4: ignition */
traces += line('M39 496.500H40.500L41.500 488.500L42.500 491.500L50 494.500L56.500 495.500V523.500M57.500 515V499M58.500 507V486.500L60 489.500L66 491.500L74 493.500L88 494.500V495.500H401.500V515.500M402.500 506V497L404.500 496V490M404.500 495.500H719.500V489.500L722 492L733 494.500L736.500 496V525.500M737.500 517V500L741 498L755 496.500V495.500H1066.500V516.500M1067.500 507V498L1069.500 496V490.500M1069.500 495.500H1268', '#36f');
traces += line('M755 496.500H1048', '#36f', 'stroke-dasharray="34 3 12 1 5 2 38 2"');
traces += line('M1095 496.500H1268', '#36f', 'stroke-dasharray="30 2 8 1 12 2"');
traces += line('M210 496.500H390M420 496.500H700', '#36f', 'stroke-dasharray="2 9 6 2 14 20 3 1"');
document.getElementById('traces').innerHTML = traces;

/* zero lines, titles, cursors and markers */
let front = '';
for (const c of channels) {
  front += line(`M40 ${c.zero + .5}H1268`, '#fff', 'stroke-dasharray="2 3"') + text('title', 43, c.y, c.title, `fill="${c.color}"`);
}
front += line('M1245.500 119V548', '#0000c8');
front += '<path d="M31 112h15l-7.500 8z" fill="#800080"/><path d="M1238 112h15l-7.500 8z" fill="#00f"/>';
front += text('mark', 38, 118, '1') + text('mark', 1245, 118, '2');
front += '<circle cx="732" cy="262" r="4.500" fill="#f00" stroke="#fff"/><circle cx="12.500" cy="435" r="4.500" fill="#ff0"/>';
front += '<path d="M1272 341h9l-4.500-6zM1272 387l4.500-5l4.500 5l-4.500 5zM1272 435h9l-4.500 6z" fill="#ff0"/>';
document.getElementById('front').innerHTML = front;

/* tick marks round the rate dial */
let ticks = '';
for (let i = 0; i <= 16; i++) {
  const a = (135 + i * 16.9) * Math.PI / 180;
  const c = Math.cos(a), s = Math.sin(a);
  ticks += `<path d="M${661 + 19 * c} ${645 + 19 * s}L${661 + 23 * c} ${645 + 23 * s}" stroke="${i === 0 || i === 5 || i === 8 ? '#000' : '#999'}"/>`;
}
document.getElementById('ticks').innerHTML = ticks;
```
